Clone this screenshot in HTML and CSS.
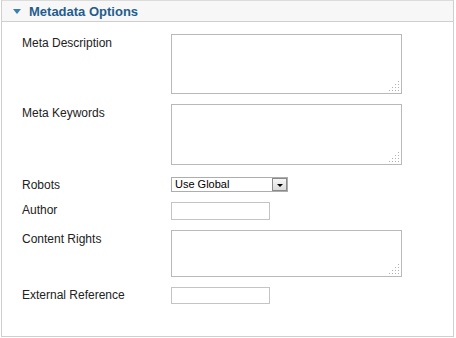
FILE: index.html
```html
<!DOCTYPE html>
<html>
<head>
<meta charset="utf-8">
<link rel="stylesheet" href="styles.css">
</head>
<body>
<div class="panel">
  <div class="panel-head">
    <span class="toggle"></span>
    <span class="title">Metadata Options</span>
  </div>
  <div class="panel-body">
    <div class="row">
      <label class="lbl">Meta Description</label>
      <span class="ta-wrap"><textarea class="ta ta-tall"></textarea><span class="grip"></span></span>
    </div>
    <div class="row">
      <label class="lbl">Meta Keywords</label>
      <span class="ta-wrap"><textarea class="ta ta-tall ta-tall2"></textarea><span class="grip"></span></span>
    </div>
    <div class="row row-sel">
      <label class="lbl lbl-sm">Robots</label>
      <span class="sel"><span class="sel-text">Use Global</span><span class="sel-btn"><span class="sel-arrow"></span></span></span>
    </div>
    <div class="row">
      <label class="lbl lbl-sm">Author</label>
      <input class="inp" type="text">
    </div>
    <div class="row">
      <label class="lbl">Content Rights</label>
      <span class="ta-wrap"><textarea class="ta ta-short"></textarea><span class="grip"></span></span>
    </div>
    <div class="row">
      <label class="lbl lbl-sm">External Reference</label>
      <input class="inp inp-short" type="text">
    </div>
  </div>
</div>
</body>
</html>
```
FILE: styles.css
```css
html, body {
  margin: 0;
  padding: 0;
  background: #fff;
}
body {
  font-family: "Liberation Sans", Arial, sans-serif;
  font-size: 12px;
  color: #222;
}
.panel {
  margin-left: 1px;
  width: 451px;
  height: 336px;
  border: 1px solid #cfcfcf;
  border-top: none;
  box-sizing: content-box;
}
.panel-head {
  height: 22px;
  background: #f7f7f7;
  border-top: 1px solid #dcdcdc;
  border-bottom: 1px solid #cfcfcf;
  box-sizing: border-box;
  display: flex;
  align-items: center;
  padding-left: 11px;
}
.toggle {
  width: 0;
  height: 0;
  border-left: 4px solid transparent;
  border-right: 4px solid transparent;
  border-top: 5px solid #3a7fb2;
  margin-right: 8px;
  margin-top: 1px;
}
.title {
  font-weight: bold;
  font-size: 13px;
  color: #1f5d8e;
}
.panel-body {
  padding: 12px 0 0 20px;
  display: flex;
  flex-direction: column;
  gap: 10px;
}
.row {
  display: flex;
  align-items: flex-start;
}
.row-sel {
  margin-top: 2px;
}
.lbl {
  width: 149px;
  padding-top: 2px;
  line-height: 14px;
}
.lbl-sm {
  padding-top: 1px;
}
.ta-wrap {
  position: relative;
  display: block;
  width: 231px;
}
.ta {
  display: block;
  width: 231px;
  box-sizing: border-box;
  border: 1px solid #b9b9b9;
  margin: 0;
  padding: 2px;
  resize: none;
  background: #fff;
  outline: none;
}
.ta-tall { height: 60px; }
.ta-tall2 { height: 61px; }
.ta-short { height: 47px; }
.grip {
  position: absolute;
  right: 3px;
  bottom: 3px;
  width: 11px;
  height: 11px;
  background-image: radial-gradient(circle, #b0b0b0 0.9px, transparent 1px);
  background-size: 3px 3px;
  clip-path: polygon(100% 0, 100% 100%, 0 100%);
}
.sel {
  display: flex;
  align-items: center;
  width: 117px;
  height: 15px;
  border: 1px solid #adadad;
  box-sizing: border-box;
  background: #fff;
}
.sel-text {
  flex: 1;
  font-size: 11px;
  color: #000;
  padding-left: 3px;
  line-height: 13px;
}
.sel-btn {
  width: 15px;
  height: 13px;
  box-sizing: border-box;
  border: 1px solid #8a8a8a;
  background: linear-gradient(#f6f6f6, #dcdcdc);
  display: flex;
  align-items: center;
  justify-content: center;
}
.sel-arrow {
  width: 0;
  height: 0;
  border-left: 3px solid transparent;
  border-right: 3px solid transparent;
  border-top: 3px solid #000;
  margin-top: 1px;
}
.inp {
  display: block;
  width: 99px;
  height: 18px;
  box-sizing: border-box;
  border: 1px solid #c4c4c4;
  margin: 0;
  padding: 0 2px;
  outline: none;
}
.inp-short {
  height: 17px;
}
```
